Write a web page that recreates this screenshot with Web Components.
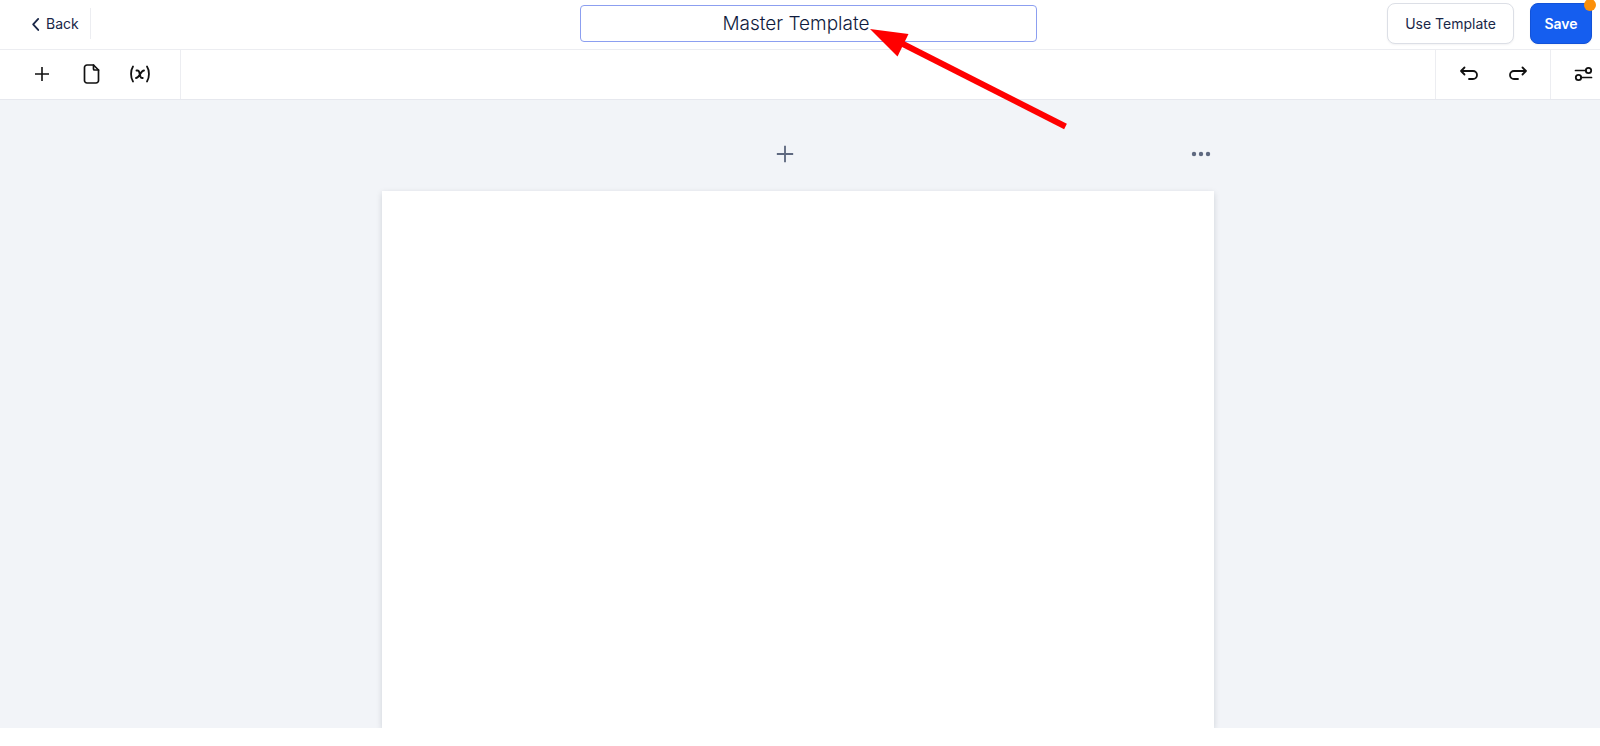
<!DOCTYPE html>
<html lang="en">
<head>
<meta charset="utf-8">
<title>Master Template</title>
<style>
	body {
		margin: 0;
		font-family: Inter, "Liberation Sans", sans-serif;
		font-size: 14px;
		color: #1a2748;
		background: #fff;
		--line: #ecedf1;
		--workspace: #f2f4f8;
		--muted: #5f6980;
		--primary: #155eef;
	}
</style>
</head>
<body>
<template-editor></template-editor>
<script>
const ICONS = {
	back: `<path d="M15.500 6.500 10 12.500l5.500 6" stroke-width="2"/>`,
	plus: `<path d="M12 5v14M5 12h14" stroke-linecap="butt" stroke-width="1.600"/>`,
	page: `<path d="M14.500 3H8a2.500 2.500 0 0 0-2.500 2.500v13A2.500 2.500 0 0 0 8 21h9a2.500 2.500 0 0 0 2.500-2.500V8z" stroke-width="1.700"/><path d="M14.500 3v4a1 1 0 0 0 1 1h4" stroke-width="1.700"/>`,
	variable: `<path d="M5 4.500c-2.600 4-2.600 11 0 15M19 4.500c2.600 4 2.600 11 0 15" stroke-width="1.800"/><path d="M8.500 8.500h1c1 0 1.400.500 1.700 1.500l1.200 4.500c.3 1 .8 1.500 1.800 1.500h.5M16 8.500c-1.800 0-2.700 1.600-4 3.700S9.800 16 8 16" stroke-width="1.900"/>`,
	undo: `<path d="M7.500 5.500 4 9l3.500 3.500M4 9h12a3.800 3.800 0 0 1 0 8H12" stroke-width="1.800"/>`,
	redo: `<path d="M16.500 5.500 20 9l-3.500 3.500M20 9H8a3.800 3.800 0 0 0 0 8h4" stroke-width="1.800"/>`,
	sliders: `<path d="M3.500 8.500H14M9 15.500h10.500" stroke-width="1.700"/><circle cx="16.500" cy="8.500" r="2.700" stroke-width="1.800"/><circle cx="6.500" cy="15.500" r="2.700" stroke-width="1.800"/>`,
	more: `<g fill="currentColor" stroke="none"><circle cx="5" cy="12" r="2.200"/><circle cx="12" cy="12" r="2.200"/><circle cx="19" cy="12" r="2.200"/></g>`
};

function attach(element,html){
	element.attachShadow({mode:"open"}).innerHTML = html;
}

class EditorIcon extends HTMLElement {
	connectedCallback(){
		if (this.shadowRoot){
			return;
		}
		attach(this,`
			<style>
				:host {
					display: block;
					width: var(--icon-size,24px);
					height: var(--icon-size,24px);
				}
				svg {
					display: block;
					width: 100%;
					height: 100%;
					fill: none;
					stroke: currentColor;
					stroke-width: 1.5;
					stroke-linecap: round;
					stroke-linejoin: round;
				}
			</style>
			<svg viewBox="0 0 24 24" aria-hidden="true">${ICONS[this.getAttribute("name")]}</svg>
		`);
	}
}
customElements.define("editor-icon",EditorIcon);

class IconButton extends HTMLElement {
	connectedCallback(){
		if (this.shadowRoot){
			return;
		}
		attach(this,`
			<style>
				:host {
					display: block;
				}
				button {
					display: block;
					padding: 0;
					border: 0;
					background: none;
					color: inherit;
					cursor: pointer;
				}
			</style>
			<button type="button" aria-label="${this.getAttribute("label")}">
				<editor-icon name="${this.getAttribute("icon")}"></editor-icon>
			</button>
		`);
	}
}
customElements.define("icon-button",IconButton);

class ActionButton extends HTMLElement {
	constructor(){
		super();
		attach(this,`
			<style>
				:host {
					display: block;
					position: relative;
				}
				button {
					box-sizing: border-box;
					min-width: 127px;
					height: 41px;
					padding: 0 16px;
					border: 1px solid #dcdfe6;
					border-radius: 8px;
					background: #fff;
					box-shadow: 0 1px 2px #1018280d;
					color: inherit;
					font: 400 14px/20px Inter, "Liberation Sans", sans-serif;
					white-space: nowrap;
					cursor: pointer;
				}
				:host([primary]) button {
					min-width: 62px;
					padding: 0 12px;
					border-color: #1252d8;
					background: var(--primary);
					color: #fff;
					font-weight: 600;
				}
				:host([unsaved])::after {
					content: "";
					position: absolute;
					top: -4px;
					right: -4px;
					width: 12px;
					height: 12px;
					border-radius: 50%;
					background: #fb8f0a;
				}
			</style>
			<button type="button"><slot></slot></button>
		`);
	}
}
customElements.define("action-button",ActionButton);

class EditorHeader extends HTMLElement {
	constructor(){
		super();
		attach(this,`
			<style>
				:host {
					display: grid;
					grid-template-columns: 1fr minmax(200px,457px) 1fr;
					align-items: center;
					box-sizing: border-box;
					height: 50px;
					padding: 0 8px 2px 24px;
					border-bottom: 1px solid var(--line);
				}
				a {
					--icon-size: 22px;
					display: flex;
					align-items: center;
					justify-self: start;
					height: 31px;
					padding-right: 11px;
					border-right: 1px solid var(--line);
					color: inherit;
					line-height: 20px;
					text-decoration: none;
				}
				input {
					box-sizing: border-box;
					width: 100%;
					height: 37px;
					padding: 0 32px 0 8px;
					border: 1px solid #8c9ff0;
					border-radius: 4px;
					outline: 0;
					background: #fff;
					color: #0f1b3d;
					font: 300 19px/28px Inter, "Liberation Sans", sans-serif;
					text-align: center;
				}
				.actions {
					display: flex;
					justify-content: flex-end;
					gap: 16px;
				}
			</style>
			<a href="#"><editor-icon name="back"></editor-icon>Back</a>
			<input type="text" aria-label="Template name" value="Master Template">
			<div class="actions">
				<action-button>Use Template</action-button>
				<action-button primary unsaved>Save</action-button>
			</div>
		`);
	}
}
customElements.define("editor-header",EditorHeader);

class EditorToolbar extends HTMLElement {
	constructor(){
		super();
		attach(this,`
			<style>
				:host {
					display: flex;
					justify-content: space-between;
					box-sizing: border-box;
					height: 50px;
					border-bottom: 1px solid #e6e8ee;
					color: #111;
				}
				.side, .group {
					display: flex;
				}
				.group {
					align-items: center;
					gap: 25px;
					padding: 0 20px 1px 21px;
					border-left: 1px solid var(--line);
				}
				.insert {
					padding-right: 28px;
					padding-left: 30px;
					border-left: 0;
					border-right: 1px solid var(--line);
				}
				.settings {
					padding-right: 4px;
				}
			</style>
			<div class="group insert">
				<icon-button icon="plus" label="Add element"></icon-button>
				<icon-button icon="page" label="Pages"></icon-button>
				<icon-button icon="variable" label="Variables"></icon-button>
			</div>
			<div class="side">
				<div class="group">
					<icon-button icon="undo" label="Undo"></icon-button>
					<icon-button icon="redo" label="Redo"></icon-button>
				</div>
				<div class="group settings">
					<icon-button icon="sliders" label="Settings"></icon-button>
				</div>
			</div>
		`);
	}
}
customElements.define("editor-toolbar",EditorToolbar);

class EditorWorkspace extends HTMLElement {
	constructor(){
		super();
		attach(this,`
			<style>
				:host {
					display: flex;
					flex-direction: column;
					align-items: center;
					box-sizing: border-box;
					padding: 38px 4px 0 0;
					background: var(--workspace);
					overflow: hidden;
				}
				.controls, .sheet {
					width: 100%;
					max-width: 832px;
				}
				.controls {
					display: flex;
					align-items: center;
					height: 32px;
					margin-bottom: 21px;
					color: var(--muted);
				}
				.add {
					--icon-size: 28px;
					display: flex;
					flex: 1;
					justify-content: center;
				}
				.more {
					padding: 0 1px;
				}
				.sheet {
					flex: 1;
					background: #fff;
					box-shadow: 0 2px 6px #10182826;
				}
			</style>
			<div class="controls">
				<div class="add"><icon-button icon="plus" label="Add block"></icon-button></div>
				<icon-button class="more" icon="more" label="Page options"></icon-button>
			</div>
			<div class="sheet"></div>
		`);
	}
}
customElements.define("editor-workspace",EditorWorkspace);

// Red arrow that points at the template name
class PointerArrow extends HTMLElement {
	constructor(){
		super();
		attach(this,`
			<style>
				:host {
					position: absolute;
					top: 28px;
					left: calc(50% + 70px);
					pointer-events: none;
				}
				svg {
					display: block;
				}
			</style>
			<svg width="200" height="104" viewBox="0 0 200 104" aria-hidden="true">
				<path d="M30 14.500 195.500 98.500" stroke="#f00" stroke-width="6"/>
				<path d="M0 1 38.500 6 27.500 28.500z" fill="#f00"/>
			</svg>
		`);
	}
}
customElements.define("pointer-arrow",PointerArrow);

class TemplateEditor extends HTMLElement {
	constructor(){
		super();
		attach(this,`
			<style>
				:host {
					display: flex;
					flex-direction: column;
					position: relative;
					box-sizing: border-box;
					height: 100vh;
					padding-bottom: 18px;
				}
				editor-workspace {
					flex: 1;
				}
			</style>
			<editor-header></editor-header>
			<editor-toolbar></editor-toolbar>
			<editor-workspace></editor-workspace>
			<pointer-arrow></pointer-arrow>
		`);
	}
}
customElements.define("template-editor",TemplateEditor);
</script>
</body>
</html>
